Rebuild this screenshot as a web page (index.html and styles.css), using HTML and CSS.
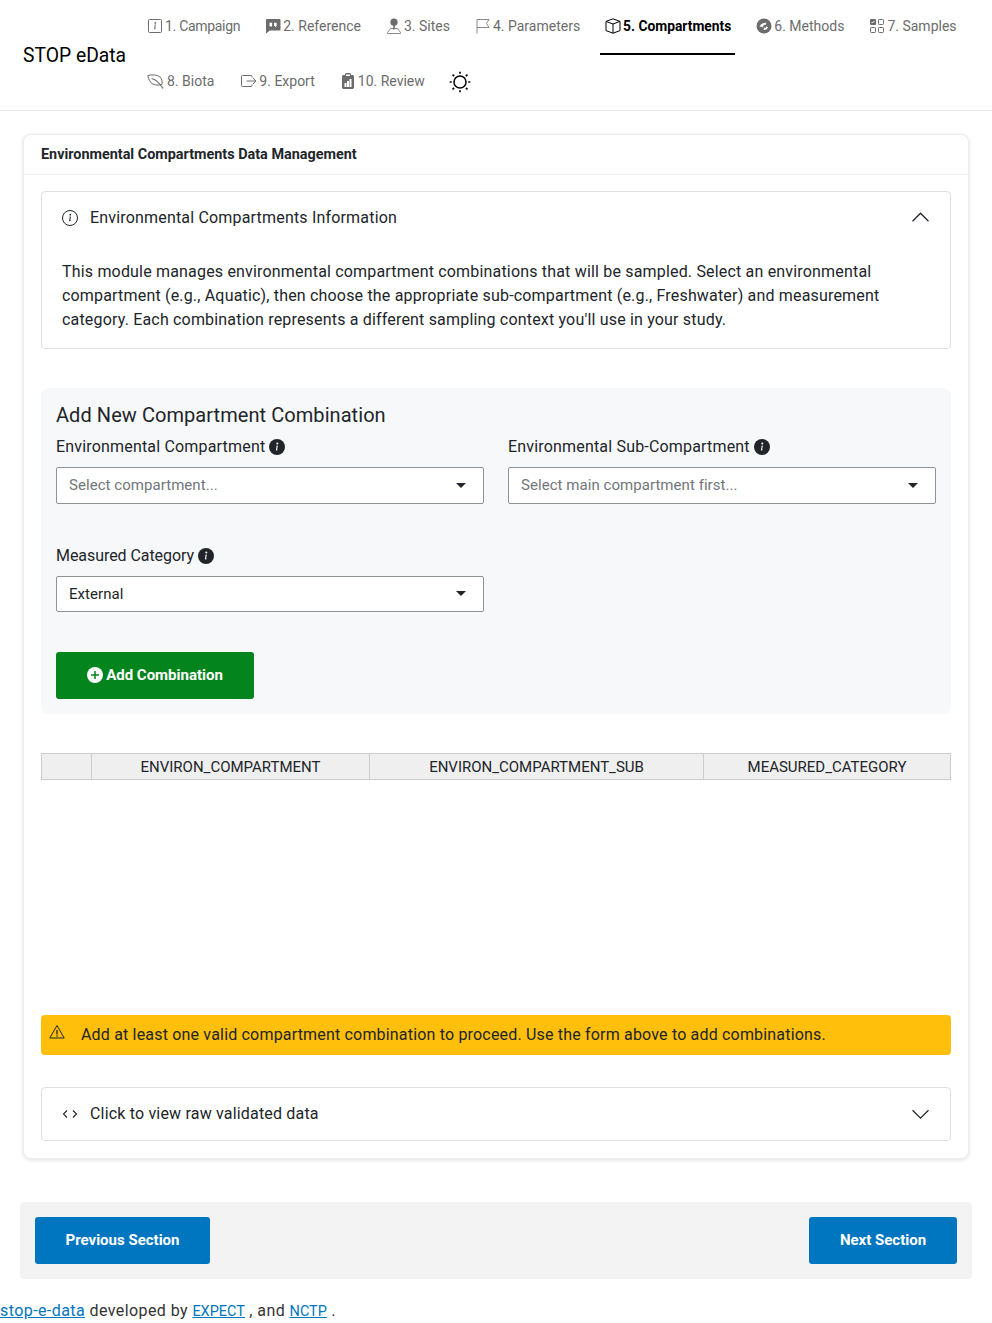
FILE: index.html
```html
<!DOCTYPE html>
<html lang="en">
<head>
    <meta charset="UTF-8">
    <meta name="viewport" content="width=device-width, initial-scale=1.0">
    <title>STOP eData</title>
    <link rel="stylesheet" href="styles.css">
</head>
<body>

    <!-- Top navigation -->
    <header class="site-header">
        <a class="brand">STOP eData</a>
        <nav class="tabs">
            <a class="tab tab-tight">
                <svg class="ico" viewBox="0 0 16 16"><rect x="1.5" y="1.5" width="13" height="13" rx="1" fill="none" stroke="currentColor"/><path d="M8.900 6.600 7.200 6.800l-.1.300.4.100c.2 0 .3.100.3.300l-.6 2.800c-.1.700.1 1 .7 1 .4 0 .9-.2 1.100-.5l.1-.4c-.2.100-.4.200-.6.200-.2 0-.3-.2-.2-.4z" fill="currentColor"/><circle cx="8.300" cy="4.900" r=".9" fill="currentColor"/></svg>
                1. Campaign
            </a>
            <a class="tab">
                <svg class="ico" viewBox="0 0 16 16"><path d="M1.500 1h13c.6 0 1 .4 1 1v9.500c0 .6-.4 1-1 1H5l-4 3V2c0-.6.4-1 .5-1z" fill="currentColor"/><path d="M4.500 4.800h2.600v2.400c0 1-.6 1.500-1.600 1.700v-1h-1zM9 4.800h2.600v2.400c0 1-.6 1.500-1.600 1.700v-1H9z" fill="#fff"/></svg>
                2. Reference
            </a>
            <a class="tab">
                <svg class="ico" viewBox="0 0 16 16"><circle cx="8" cy="4.200" r="3.600" fill="currentColor"/><path d="M7.200 7h1.600v4.500H7.200z" fill="currentColor"/><path d="M4.500 10.500h7l3 4v1h-13v-1z" fill="none" stroke="currentColor" stroke-width=".8"/></svg>
                3. Sites
            </a>
            <a class="tab">
                <svg class="ico" viewBox="0 0 16 16"><path d="M2 15.500V1.500h12l-2.500 4 2.500 4H2" fill="none" stroke="currentColor" stroke-width=".8"/></svg>
                4. Parameters
            </a>
            <a class="tab active">
                <svg class="ico" viewBox="0 0 16 16"><path d="M8 .8 15 3.400v9.200L8 15.200 1 12.600V3.400zM1 3.400 8 6l7-2.600M8 6v9.200" fill="none" stroke="currentColor"/></svg>
                5. Compartments
            </a>
            <a class="tab">
                <svg class="ico" viewBox="0 0 16 16"><circle cx="8" cy="8" r="7.500" fill="currentColor"/><path d="M3.500 9c1-3 3.500-4.500 7-4.200L9.500 7 8 6.800 6.500 9.500 5 8.500zM7.500 12l.7-2.500 1.300.7.500-1.700 2 .5c-.5 2-2.300 3.200-4.500 3z" fill="#fff"/></svg>
                6. Methods
            </a>
            <a class="tab">
                <svg class="ico" viewBox="0 0 16 16"><rect x="1" y="1" width="6" height="6" rx="1" fill="currentColor"/><path d="m2.500 4 1 1 2-2" fill="none" stroke="#fff"/><rect x="9.500" y="1.500" width="5" height="5" rx=".8" fill="none" stroke="currentColor"/><rect x="1.500" y="9.500" width="5" height="5" rx=".8" fill="none" stroke="currentColor"/><rect x="9.500" y="9.500" width="5" height="5" rx=".8" fill="none" stroke="currentColor"/></svg>
                7. Samples
            </a>
            <a class="tab tab-leaf">
                <svg class="ico ico-wide" viewBox="0 0 17 16"><path d="M.8 2.500c4-1 9.200-.9 12 1.300 2 1.700 2.700 4.600 2.200 7.700-3.400.9-7.400.9-10-1C3 9 1.500 6 .8 2.500z" fill="none" stroke="currentColor"/><path d="M4.500 5.500c4 .8 8 4.500 11.500 10" fill="none" stroke="currentColor" stroke-width="1.200"/></svg>
                8. Biota
            </a>
            <a class="tab">
                <svg class="ico" viewBox="0 0 16 16"><path d="M11 4.500V3.500c0-.7-.4-1-1-1H1.500c-.6 0-1 .3-1 1v9c0 .7.400 1 1 1H10c.6 0 1-.3 1-1v-1M5.500 8h9.500M12 5l3 3-3 3" fill="none" stroke="currentColor"/></svg>
                9. Export
            </a>
            <a class="tab">
                <svg class="ico" viewBox="0 0 16 16"><path d="M2 3.500C2 2.700 2.700 2 3.500 2H5v-.5C5 .7 5.700 0 6.500 0h3c.8 0 1.500.7 1.500 1.500V2h1.500c.8 0 1.500.7 1.500 1.500v11c0 .8-.7 1.500-1.500 1.500h-9c-.8 0-1.500-.7-1.500-1.500z" fill="currentColor"/><path d="M6 1.500h4V3H6zM4.500 10h2v4h-2zM7 8h2v6H7zM9.500 6h2v8h-2z" fill="#fff"/></svg>
                10. Review
            </a>
            <a class="theme-toggle">
                <svg viewBox="0 0 16 16" width="22" height="22"><circle cx="8" cy="8" r="4.400" fill="none" stroke="currentColor" stroke-width="1.100"/><path d="M8 .5v1.500M8 14v1.500M.5 8H2M14 8h1.500M2.600 2.600l1.100 1.100M12.300 12.300l1.100 1.100M2.600 13.400l1.100-1.100M12.300 3.700l1.100-1.100" fill="none" stroke="currentColor" stroke-width="1.200"/></svg>
            </a>
        </nav>
    </header>

    <main class="content">
        <section class="card">
            <div class="card-header">Environmental Compartments Data Management</div>
            <div class="card-body">

                <!-- Info accordion -->
                <div class="accordion">
                    <div class="accordion-title">
                        <svg class="acc-ico" viewBox="0 0 16 16"><circle cx="8" cy="8" r="7.500" fill="none" stroke="currentColor"/><path d="M8.900 6.600 7.200 6.800l-.1.300.4.100c.2 0 .3.100.3.300l-.6 2.800c-.1.700.1 1 .7 1 .4 0 .9-.2 1.100-.5l.1-.4c-.2.100-.4.200-.6.200-.2 0-.3-.2-.2-.4z" fill="currentColor"/><circle cx="8.300" cy="4.700" r=".9" fill="currentColor"/></svg>
                        <span class="acc-label">Environmental Compartments Information</span>
                        <svg class="chevron" viewBox="0 0 16 16"><path d="M.5 11.500 8 4l7.500 7.500" fill="none" stroke="currentColor" stroke-width="1.200"/></svg>
                    </div>
                    <p class="accordion-text">This module manages environmental compartment combinations that will be sampled. Select an environmental compartment (e.g., Aquatic), then choose the appropriate sub-compartment (e.g., Freshwater) and measurement category. Each combination represents a different sampling context you'll use in your study.</p>
                </div>

                <!-- Form -->
                <div class="form-panel">
                    <h2 class="form-title">Add New Compartment Combination</h2>
                    <div class="form-grid">
                        <div class="field">
                            <label class="field-label">Environmental Compartment <svg class="tip" viewBox="0 0 16 16"><circle cx="8" cy="8" r="8" fill="currentColor"/><path d="M8.900 6.600 7 6.900l-.1.300.4.100c.2 0 .3.100.3.300l-.6 2.900c-.1.700.1 1 .7 1 .4 0 .9-.2 1.100-.5l.1-.4c-.2.100-.4.200-.6.200-.2 0-.3-.2-.2-.4z" fill="#fff"/><circle cx="8.300" cy="4.500" r="1" fill="#fff"/></svg></label>
                            <div class="select placeholder"><span>Select compartment...</span><i class="caret"></i></div>
                        </div>
                        <div class="field">
                            <label class="field-label">Environmental Sub-Compartment <svg class="tip" viewBox="0 0 16 16"><circle cx="8" cy="8" r="8" fill="currentColor"/><path d="M8.900 6.600 7 6.900l-.1.300.4.100c.2 0 .3.100.3.300l-.6 2.900c-.1.700.1 1 .7 1 .4 0 .9-.2 1.100-.5l.1-.4c-.2.100-.4.200-.6.200-.2 0-.3-.2-.2-.4z" fill="#fff"/><circle cx="8.300" cy="4.500" r="1" fill="#fff"/></svg></label>
                            <div class="select placeholder"><span>Select main compartment first...</span><i class="caret"></i></div>
                        </div>
                        <div class="field">
                            <label class="field-label label-tight">Measured Category <svg class="tip" viewBox="0 0 16 16"><circle cx="8" cy="8" r="8" fill="currentColor"/><path d="M8.900 6.600 7 6.900l-.1.300.4.100c.2 0 .3.100.3.300l-.6 2.900c-.1.700.1 1 .7 1 .4 0 .9-.2 1.100-.5l.1-.4c-.2.100-.4.200-.6.200-.2 0-.3-.2-.2-.4z" fill="#fff"/><circle cx="8.300" cy="4.500" r="1" fill="#fff"/></svg></label>
                            <div class="select"><span>External</span><i class="caret"></i></div>
                        </div>
                    </div>
                    <button class="btn btn-add">
                        <svg class="btn-ico" viewBox="0 0 16 16"><circle cx="8" cy="8" r="8" fill="#fff"/><path d="M8 4v8M4 8h8" stroke="#04841c" stroke-width="1.500"/></svg>
                        Add Combination
                    </button>
                </div>

                <!-- Combinations table -->
                <div class="table-wrap">
                    <table class="data-table">
                        <thead>
                            <tr>
                                <th class="col-index"></th>
                                <th class="col-main">ENVIRON_COMPARTMENT</th>
                                <th class="col-sub">ENVIRON_COMPARTMENT_SUB</th>
                                <th>MEASURED_CATEGORY</th>
                            </tr>
                        </thead>
                    </table>
                </div>

                <!-- Warning -->
                <div class="alert">
                    <svg class="alert-ico" viewBox="0 0 16 16"><path d="M8 1.500 15.200 14H.8z" fill="none" stroke="currentColor" stroke-linejoin="round"/><path d="M8 6v4.500" stroke="currentColor" stroke-width="1.300"/><circle cx="8" cy="12" r=".8" fill="currentColor"/></svg>
                    <span>Add at least one valid compartment combination to proceed. Use the form above to add combinations.</span>
                </div>

                <!-- Raw data accordion -->
                <div class="accordion accordion-raw">
                    <div class="accordion-title">
                        <svg class="acc-ico" viewBox="0 0 16 16"><path d="M5 4.500 1.500 8 5 11.500M11 4.500 14.500 8 11 11.500" fill="none" stroke="currentColor" stroke-width="1.100"/></svg>
                        <span class="acc-label">Click to view raw validated data</span>
                        <svg class="chevron" viewBox="0 0 16 16"><path d="M.5 4 8 11.500 15.500 4" fill="none" stroke="currentColor" stroke-width="1.200"/></svg>
                    </div>
                </div>

            </div>
        </section>

        <div class="section-nav">
            <button class="btn btn-blue btn-prev">Previous Section</button>
            <button class="btn btn-blue btn-next">Next Section</button>
        </div>
    </main>

    <footer class="site-footer">
        <a href="#">stop-e-data</a> developed by <a href="#" class="caps">EXPECT</a> , and <a href="#" class="caps">NCTP</a> .
    </footer>

</body>
</html>
```

FILE: styles.css
```css
* {
    box-sizing: border-box;
}

body {
    margin: 0;
    font-family: Roboto, "Liberation Sans", sans-serif;
    font-size: 16px;
    line-height: 24px;
    letter-spacing: 0.18px;
    color: #212529;
    background-color: #fff;
}

/* Header */
.site-header {
    display: flex;
    align-items: center;
    height: 111px;
    padding-left: 23px;
    border-bottom: 1px solid #e9e9e9;
}

.brand {
    width: 119px;
    padding-top: 2px;
    font-size: 19.3px;
    letter-spacing: 0;
    color: #000;
}

.tabs {
    display: flex;
    flex-wrap: wrap;
    align-items: center;
    column-gap: 16px;
    width: 840px;
}

.tab {
    display: flex;
    align-items: center;
    gap: 2px;
    height: 55px;
    padding: 0 4px 2px 5px;
    font-size: 14px;
    letter-spacing: 0;
    color: #6c6c6c;
    border-bottom: 2px solid transparent;
}

.tab-tight {
    letter-spacing: -0.3px;
}

.tab-leaf {
    gap: 3px;
    padding-right: 6px;
}

.tab.active {
    font-size: 13.8px;
    font-weight: 700;
    color: #000;
    border-bottom-color: #000;
}

.ico {
    width: 16px;
    height: 16px;
}

.ico-wide {
    width: 17px;
}

.theme-toggle {
    display: flex;
    margin: 0 0 2px 4px;
    color: #000;
}

/* Card */
.content {
    padding: 23px 20px 0;
}

.card {
    margin: 0 3px 0;
    background-color: #fff;
    border: 1px solid #ececec;
    border-radius: 8px;
    box-shadow: 0 1px 4px rgba(0, 0, 0, 0.12);
}

.card-header {
    height: 40px;
    padding: 0 17px;
    font-size: 14.4px;
    font-weight: 700;
    line-height: 40px;
    letter-spacing: 0;
    border-bottom: 1px solid #ececec;
}

.card-body {
    padding: 16px 17px 17px;
}

.accordion {
    border: 1px solid #dfe0e4;
    border-radius: 4px;
}

.accordion-title {
    display: flex;
    align-items: center;
    height: 51px;
    padding: 0 21px 0 20px;
}

.acc-ico {
    width: 16px;
    height: 16px;
    margin-right: 12px;
}

.acc-label {
    flex: 1;
}

.chevron {
    width: 17px;
    height: 17px;
}

.accordion-text {
    margin: 0;
    padding: 17px 20px 16px;
}

/* Form */
.form-panel {
    margin-top: 39px;
    height: 326px;
    padding: 15px;
    background-color: #f7f8fa;
    border-radius: 8px;
}

.form-title {
    margin: 0 0 8px;
    font-size: 20px;
    font-weight: 400;
    line-height: 24px;
    letter-spacing: 0.06px;
}

.form-grid {
    display: grid;
    grid-template-columns: 1fr 1fr;
    column-gap: 24px;
    row-gap: 40px;
}

.field-label {
    display: flex;
    align-items: center;
    gap: 4px;
    margin-bottom: 8px;
}

.label-tight {
    letter-spacing: -0.06px;
}

.tip {
    width: 16px;
    height: 16px;
}

.select {
    display: flex;
    align-items: center;
    justify-content: space-between;
    height: 36.5px;
    padding: 0 12px;
    font-size: 15px;
    letter-spacing: 0.05px;
    background-color: #fff;
    border: 1px solid #8f939a;
    border-radius: 2px;
}

.placeholder {
    color: #71767a;
}

.caret {
    width: 0;
    height: 0;
    margin-right: 5px;
    border-top: 5px solid #212529;
    border-left: 5px solid transparent;
    border-right: 5px solid transparent;
}

.btn {
    display: inline-flex;
    align-items: center;
    justify-content: center;
    height: 47px;
    padding: 0 0 2px;
    font-family: inherit;
    font-size: 15px;
    font-weight: 700;
    letter-spacing: 0;
    color: #fff;
    border: none;
    border-radius: 3px;
}

.btn-add {
    gap: 3px;
    width: 198px;
    margin-top: 40px;
    background-color: #04841c;
}

.btn-ico {
    width: 16px;
    height: 16px;
}

/* Table */
.table-wrap {
    height: 262px;
    margin-top: 39px;
}

.data-table {
    width: 100%;
    table-layout: fixed;
    border-collapse: collapse;
}

.data-table th {
    height: 26px;
    padding: 0;
    font-size: 15px;
    font-weight: 400;
    letter-spacing: 0;
    background-color: #efefef;
    border: 1px solid #ccc;
}

.col-index {
    width: 50px;
}

.col-main {
    width: 278px;
}

.col-sub {
    width: 334px;
}

/* Warning */
.alert {
    display: flex;
    align-items: center;
    height: 40px;
    padding: 0 8px;
    background-color: #ffbf0a;
    border-radius: 4px;
}

.alert-ico {
    width: 16px;
    height: 16px;
    margin-right: 16px;
    margin-top: -6px;
}

.accordion-raw {
    margin-top: 32px;
}

.accordion-raw .accordion-title {
    height: 52px;
}

/* Section navigation */
.section-nav {
    display: flex;
    justify-content: space-between;
    height: 77px;
    margin-top: 43px;
    padding: 15px;
    background-color: #f3f3f3;
    border-radius: 4px;
}

.btn-blue {
    background-color: #0076c0;
}

.btn-prev {
    width: 175px;
}

.btn-next {
    width: 148px;
}

.site-footer {
    margin-top: 20px;
    letter-spacing: 0.42px;
    color: #333;
}

.site-footer a {
    color: #0076c0;
    text-decoration: underline;
}

.site-footer a.caps {
    font-size: 14.5px;
    letter-spacing: 0;
}
```
